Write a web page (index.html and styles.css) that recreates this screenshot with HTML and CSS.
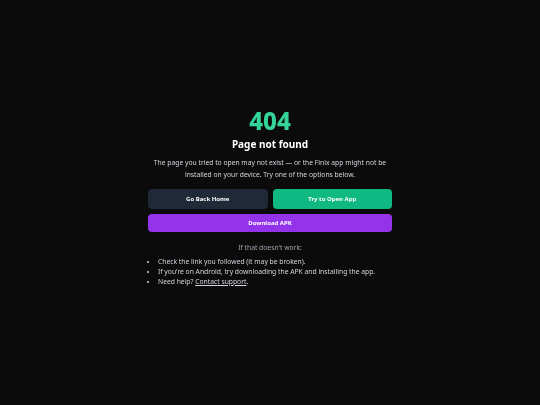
FILE: index.html
```html
<!DOCTYPE html>
<html lang="en">
<head>
<meta charset="utf-8">
<title>Page not found</title>
<link rel="stylesheet" href="styles.css">
</head>
<body>
<main class="page">
  <section class="card">
    <h1 class="code">404</h1>
    <h2 class="title">Page not found</h2>
    <p class="lead">The page you tried to open may not exist — or the Finix app might not be installed on your device. Try one of the options below.</p>
    <div class="actions">
      <a class="btn btn-dark" href="#">Go Back Home</a>
      <a class="btn btn-green" href="#">Try to Open App</a>
      <a class="btn btn-purple btn-wide" href="#">Download APK</a>
    </div>
    <p class="help">If that doesn't work:</p>
    <ul class="tips">
      <li>Check the link you followed (it may be broken).</li>
      <li>If you're on Android, try downloading the APK and installing the app.</li>
      <li>Need help? <a class="link" href="#">Contact support</a>.</li>
    </ul>
  </section>
</main>
</body>
</html>
```
FILE: styles.css
```css
* { box-sizing: border-box; }
html, body { margin: 0; padding: 0; }
body {
  background: #0b0b0c;
  color: #f3f4f6;
  font-family: "Noto Sans", "Open Sans", sans-serif;
}
.page {
  min-height: 100vh;
  padding-bottom: 12px;
  display: flex;
  align-items: center;
  justify-content: center;
}
.card {
  width: 244px;
  text-align: center;
  will-change: transform;
}
.code {
  margin: 0;
  font-size: 24px;
  line-height: 28px;
  font-weight: 800;
  color: #34d399;
}
.title {
  margin: 2px 0 0;
  font-size: 10px;
  line-height: 14px;
  font-weight: 700;
  color: #ffffff;
}
.lead {
  margin: 6px 0 0;
  font-size: 6.75px;
  line-height: 12px;
  color: #d1d5db;
}
.actions {
  margin-top: 8px;
  display: grid;
  grid-template-columns: 1fr 1fr;
  gap: 5px;
}
.btn {
  display: flex;
  align-items: center;
  justify-content: center;
  height: 20px;
  border-radius: 4px;
  font-size: 6px;
  font-weight: 700;
  color: #ffffff;
  text-decoration: none;
}
.btn-dark { background: #1f2937; }
.btn-green { background: #10b981; }
.btn-purple { background: #9333ea; }
.btn-wide { grid-column: 1 / -1; height: 18px; }
.help {
  margin: 11px 0 0;
  font-size: 6.75px;
  line-height: 10px;
  color: #9ca3af;
}
.tips {
  margin: 4px 0 0;
  padding-left: 10px;
  text-align: left;
  font-size: 6.75px;
  line-height: 10px;
  color: #d1d5db;
}
.link {
  color: #d1d5db;
  text-decoration: underline;
}
```
